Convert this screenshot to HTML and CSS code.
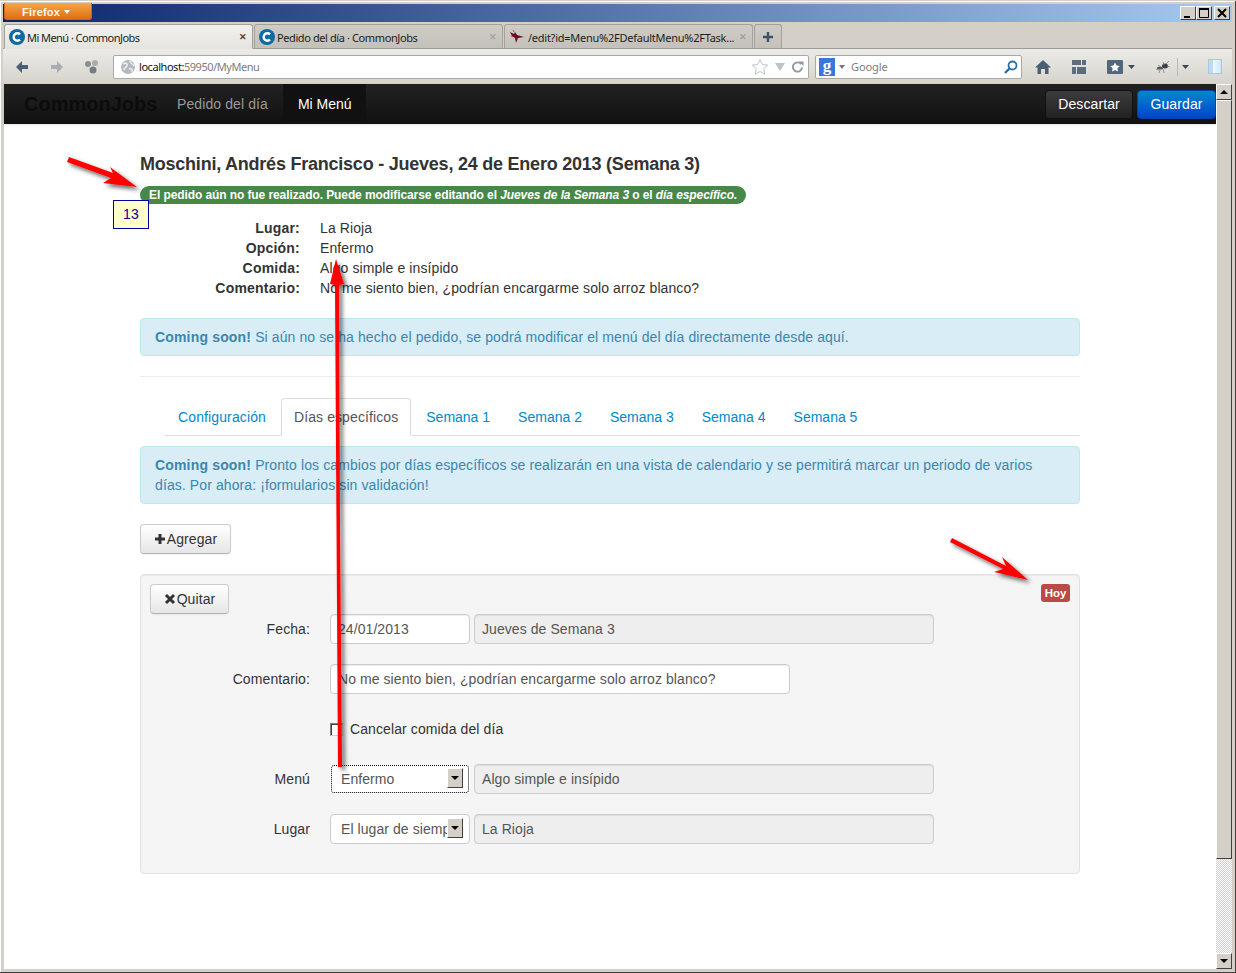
FILE: index.html
```html
<!DOCTYPE html>
<html lang="es">
<head>
<meta charset="utf-8">
<title>Mi Menú · CommonJobs</title>
<link rel="stylesheet" href="styles.css">
</head>
<body>
<div class="window">
  <div class="titlebar">
    <div class="ff-button"><span class="ff-label">Firefox</span> <span class="ff-caret"></span></div>
    <div class="win-controls">
      <span class="win-btn"><svg width="14" height="12" viewBox="0 0 14 12"><rect x="3" y="9" width="6" height="2" fill="#000"/></svg></span>
      <span class="win-btn"><svg width="14" height="12" viewBox="0 0 14 12"><path d="M2.5 1.500h9v9h-9z" fill="none" stroke="#000"/><rect x="2" y="1" width="10" height="2" fill="#000"/></svg></span>
      <span class="win-btn win-btn-last"><svg width="14" height="12" viewBox="0 0 14 12"><path d="M3 2l8 8M11 2l-8 8" stroke="#000" stroke-width="2"/></svg></span>
    </div>
  </div>

  <div class="tabstrip">
    <div class="tab tab-active">
      <svg class="fav" width="16" height="16" viewBox="0 0 16 16"><circle cx="8" cy="8" r="8" fill="#0e6ba0"/><path d="M11 5.400A3.700 3.700 0 1 0 11 10.600" fill="none" stroke="#fff" stroke-width="2.400"/></svg>
      <span class="tab-title">Mi Menú · CommonJobs</span>
      <span class="tab-x tab-x-dark">✕</span>
    </div>
    <div class="tab tab-mid">
      <svg class="fav" width="16" height="16" viewBox="0 0 16 16"><circle cx="8" cy="8" r="8" fill="#0e6ba0"/><path d="M11 5.400A3.700 3.700 0 1 0 11 10.600" fill="none" stroke="#fff" stroke-width="2.400"/></svg>
      <span class="tab-title">Pedido del día · CommonJobs</span>
      <span class="tab-x">✕</span>
    </div>
    <div class="tab tab-wide">
      <svg class="fav fav-bird" width="16" height="16" viewBox="0 0 16 16"><path d="M1 3l4 2 1-2 2 3 7 2-6 1-2 5-1-5-3-2z" fill="#6b0f1f"/><path d="M2 7l2 1M4 1l1 2" stroke="#c0485a"/></svg>
      <span class="tab-title">/edit?id=Menu%2FDefaultMenu%2FTask...</span>
      <span class="tab-x">✕</span>
    </div>
    <div class="tab tab-new"><svg width="12" height="12" viewBox="0 0 12 12"><path d="M6 1v10M1 6h10" stroke="#3d5269" stroke-width="2.400"/></svg></div>
  </div>

  <div class="toolbar">
    <svg class="tool-back" width="16" height="16" viewBox="0 0 16 16"><path d="M8 2L2 8l6 6V10h6V6H8z" fill="#4a6078"/></svg>
    <svg class="tool-fwd" width="16" height="16" viewBox="0 0 16 16"><path d="M8 2l6 6-6 6V10H2V6h6z" fill="#a8adb2"/></svg>
    <svg class="tool-hist" width="16" height="16" viewBox="0 0 16 16"><circle cx="4" cy="5" r="3" fill="#8a8f94"/><circle cx="11" cy="4" r="3" fill="#a7acb0"/><circle cx="9" cy="11" r="3.500" fill="#777c82"/></svg>
    <div class="urlbar">
      <svg width="16" height="16" viewBox="0 0 16 16"><circle cx="8" cy="8" r="7" fill="#b5b8bc"/><path d="M3 5c3-2 5 0 4 2s-3 1-3 4M10 2c0 3 3 2 4 5M9 10c2-1 4 0 3 3" fill="none" stroke="#ececec" stroke-width="1.600"/></svg>
      <span class="url-text"><span class="url-host">localhost:</span>59950/MyMenu</span>
      <svg class="url-star" width="18" height="18" viewBox="0 0 18 18"><path d="M9 1.500l2.300 5 5.400.6-4 3.700 1.100 5.400L9 13.500l-4.800 2.700 1.100-5.400-4-3.700 5.400-.6z" fill="#fff" stroke="#c0c4c8"/></svg>
      <svg class="url-drop" width="10" height="8" viewBox="0 0 10 8"><path d="M0 0h10L5 8z" fill="#bcc2c8"/></svg>
      <svg class="url-reload" width="13" height="13" viewBox="0 0 14 14"><path d="M11 4.500A5 5 0 1 0 12 8" fill="none" stroke="#8f99a3" stroke-width="2"/><path d="M8.500 1.500h5v5z" fill="#8f99a3"/></svg>
    </div>
    <div class="searchbar">
      <span class="g-logo">g</span>
      <svg width="6" height="4" viewBox="0 0 6 4"><path d="M0 0h6L3 4z" fill="#777"/></svg>
      <span class="search-text">Google</span>
      <svg class="search-glass" width="14" height="14" viewBox="0 0 14 14"><circle cx="8.500" cy="5.500" r="4" fill="none" stroke="#2a6fa8" stroke-width="1.800"/><path d="M5.500 8.500L1 13" stroke="#2a6fa8" stroke-width="2.400"/></svg>
    </div>
    <svg class="tool-home" width="16" height="16" viewBox="0 0 16 16"><path d="M8 1L0 8.500h2.500V15H6v-5h4v5h3.500V8.500H16z" fill="#4a5f74"/></svg>
    <svg class="tool-panel" width="14" height="14" viewBox="0 0 14 14"><path d="M0 0h9v5H0zM10 0h4v5h-4zM0 7h4v7H0zM5 7h9v7H5z" fill="#5a6c7e"/></svg>
    <svg class="tool-bm" width="16" height="14" viewBox="0 0 16 14"><rect width="16" height="14" rx="1" fill="#52677c"/><path d="M8 2.500l1.500 3 3.300.4-2.400 2.300.6 3.300L8 10l-3 1.500.6-3.300L3.200 5.900l3.300-.4z" fill="#fff"/></svg>
    <svg class="tool-caret" width="7" height="4" viewBox="0 0 7 4"><path d="M0 0h7L3.500 4z" fill="#3d4a56"/></svg>
    <svg class="tool-bug" width="16" height="14" viewBox="0 0 16 14"><ellipse cx="10" cy="6" rx="3" ry="2.500" fill="#3c3f42"/><ellipse cx="5" cy="8" rx="3" ry="1.600" fill="#55585c"/><path d="M1 9l3 1M3 5l3 2M8 2l1 3M14 1l-3 3M15 7l-3-1M8 9l1 4M5 10l-1 3" stroke="#8a8d90" stroke-width=".9"/></svg>
    <span class="tool-sep"></span>
    <svg class="tool-caret2" width="7" height="4" viewBox="0 0 7 4"><path d="M0 0h7L3.500 4z" fill="#3d4a56"/></svg>
    <span class="tool-side"></span>
  </div>

  <div class="viewport">
    <div class="page">
      <nav class="navbar">
        <a class="brand">CommonJobs</a>
        <a class="nav-link">Pedido del día</a>
        <a class="nav-link nav-active">Mi Menú</a>
        <span class="nav-spacer"></span>
        <button class="nav-btn nav-btn-dark">Descartar</button>
        <button class="nav-btn nav-btn-blue">Guardar</button>
      </nav>

      <main class="container">
        <h1 class="title">Moschini, Andrés Francisco - Jueves, 24 de Enero 2013 (Semana 3)</h1>
        <div class="pill-row"><span class="pill">El pedido aún no fue realizado. Puede modificarse editando el <em>Jueves de la Semana 3</em> o el <em>día específico.</em></span></div>

        <dl class="summary">
          <dt>Lugar:</dt><dd>La Rioja</dd>
          <dt>Opción:</dt><dd>Enfermo</dd>
          <dt>Comida:</dt><dd>Algo simple e insípido</dd>
          <dt>Comentario:</dt><dd>No me siento bien, ¿podrían encargarme solo arroz blanco?</dd>
        </dl>

        <div class="alert alert-first"><strong>Coming soon!</strong> Si aún no se ha hecho el pedido, se podrá modificar el menú del día directamente desde aquí.</div>
        <hr class="rule">

        <ul class="tabs">
          <li class="tabs-wide"><a>Configuración</a></li>
          <li class="tabs-active"><a>Días específicos</a></li>
          <li><a>Semana 1</a></li>
          <li><a>Semana 2</a></li>
          <li><a>Semana 3</a></li>
          <li><a>Semana 4</a></li>
          <li><a>Semana 5</a></li>
        </ul>

        <div class="alert alert-second"><strong>Coming soon!</strong> Pronto los cambios por días específicos se realizarán en una vista de calendario y se permitirá marcar un periodo de varios días. Por ahora: ¡formularios sin validación!</div>

        <button class="btn btn-add"><svg width="12" height="12" viewBox="0 0 12 12"><path d="M6 1v10M1 6h10" stroke="#333" stroke-width="3"/></svg>Agregar</button>

        <section class="well">
          <div class="well-head">
            <button class="btn btn-remove"><svg width="12" height="12" viewBox="0 0 12 12"><path d="M2 2l8 8M10 2l-8 8" stroke="#333" stroke-width="3"/></svg>Quitar</button>
            <span class="badge">Hoy</span>
          </div>
          <div class="form-row form-row-first">
            <label class="form-label">Fecha:</label>
            <input class="input input-short" value="24/01/2013">
            <input class="input input-long" value="Jueves de Semana 3" disabled>
          </div>
          <div class="form-row">
            <label class="form-label">Comentario:</label>
            <input class="input input-comment" value="No me siento bien, ¿podrían encargarme solo arroz blanco?">
          </div>
          <div class="form-row form-row-check">
            <span class="form-label"></span>
            <span class="checkbox"></span>
            <span class="check-label">Cancelar comida del día</span>
          </div>
          <div class="form-row">
            <label class="form-label">Menú</label>
            <span class="select select-focus"><select><option>Enfermo</option></select><span class="select-arrow"></span></span>
            <input class="input input-long" value="Algo simple e insípido" disabled>
          </div>
          <div class="form-row">
            <label class="form-label">Lugar</label>
            <span class="select"><select><option>El lugar de siempre</option></select><span class="select-arrow"></span></span>
            <input class="input input-long" value="La Rioja" disabled>
          </div>
        </section>
      </main>
    </div>

    <div class="scrollbar">
      <span class="sb-btn"><span class="sb-up"></span></span>
      <span class="sb-thumb"></span>
      <span class="sb-track"></span>
      <span class="sb-btn"><span class="sb-down"></span></span>
    </div>

    <div class="note">13</div>

    <svg class="arrows" width="1236" height="973" viewBox="0 0 1236 973">
      <defs>
        <filter id="shade" x="-30%" y="-30%" width="160%" height="160%"><feDropShadow dx="3" dy="3" stdDeviation="2" flood-color="#000" flood-opacity=".6"/></filter>
      </defs>
      <g fill="#f00" filter="url(#shade)">
        <path d="M69 157L113 173L110 167L137 187L103 183L111 178L67 162Z"/>
        <path d="M952 538L1006 566L1002 557L1028 580L994 572L1003 569L950 542Z"/>
        <path d="M338 767L336.500 525L335 285L330 284L336 259L344 284L339 285L340 525L342 767Z"/>
      </g>
    </svg>
  </div>
</div>
</body>
</html>
```

FILE: styles.css
```css
* { box-sizing: border-box; }
html, body { margin: 0; padding: 0; }
body {
  width: 1236px;
  height: 973px;
  overflow: hidden;
  font-family: "Liberation Sans", Arial, sans-serif;
  font-size: 14px;
  line-height: 20px;
  letter-spacing: .1px;
  color: #333;
  background: #fff;
}
.window {
  position: relative;
  width: 1236px;
  height: 973px;
  display: flex;
  flex-direction: column;
  background: #d4d0c8;
  padding: 4px 4px 4px 3px;
  border-top: 1px solid #d4d0c8;
  box-shadow: inset -1px -1px 0 #404040, inset 1px 1px 0 #fff;
}
.titlebar {
  height: 18px;
  margin-top: -1px;
  display: flex;
  align-items: flex-start;
  justify-content: space-between;
  background: linear-gradient(90deg, #0a246a, #a6caf0);
  padding-left: 1px;
}
.ff-button {
  width: 88px;
  height: 17px;
  margin-top: -1px;
  background: linear-gradient(#f7a64a, #dc6f12);
  border-radius: 0 0 3px 3px;
  border: 1px solid #c9691a;
  border-top: 0;
  color: #fff4e4;
  font: bold 11px/16px "Liberation Sans", sans-serif;
  letter-spacing: .2px;
  padding: 1px 0 0 17px;
  display: flex;
  align-items: center;
  gap: 2px;
}
.ff-caret { width: 0; height: 0; border: 3px solid transparent; border-top: 4px solid #fff; border-bottom: 0; margin-left: 2px; }
.win-controls { display: flex; margin-top: 2px; padding-right: 2px; }
.win-btn {
  width: 16px;
  height: 14px;
  background: #d4d0c8;
  border: 1px solid;
  border-color: #fff #404040 #404040 #fff;
  display: flex;
}
.win-btn-last { margin-left: 2px; }
.tabstrip {
  height: 27px;
  display: flex;
  align-items: flex-end;
  padding-left: 1px;
  gap: 1px;
  background: #d4d0c8;
  border-bottom: 1px solid #9c9a94;
  font-family: "Noto Sans", "Open Sans", sans-serif;
  font-size: 11px;
  letter-spacing: -.55px;
  color: #1c1c1c;
}
.tab {
  width: 249px;
  height: 25px;
  margin-bottom: -1px;
  display: flex;
  align-items: center;
  padding: 0 5px 0 4px;
  background: linear-gradient(#cfccc6, #c4c1ba);
  border: 1px solid #a3a199;
  border-bottom: 1px solid #9c9a94;
  border-radius: 3px 3px 0 0;
}
.tab-active {
  background: linear-gradient(#f2f1ee, #e6e4df);
  border-bottom-color: #e6e4df;
}
.tab-mid { letter-spacing: -.4px; }
.tab-wide { letter-spacing: -.25px; }
.tab-new { width: 28px; justify-content: center; padding: 0; }
.fav { flex: none; margin-right: 2px; }
.fav-bird { margin-right: 3px; }
.tab-title { flex: 1; white-space: nowrap; overflow: hidden; padding-top: 2px; }
.tab-x { font-size: 9px; color: #a3a3a0; font-weight: bold; letter-spacing: 0; }
.tab-x-dark { color: #444; }
.toolbar {
  height: 35px;
  display: flex;
  align-items: center;
  background: linear-gradient(#ecebe7, #d6d3cb);
  padding-left: 11px;
  color: #333;
}
.tool-fwd { margin-left: 19px; }
.tool-hist { margin-left: 19px; }
.urlbar {
  width: 696px;
  height: 24px;
  margin-left: 13px;
  background: #fff;
  border: 1px solid #a9a8a2;
  border-radius: 2px;
  display: flex;
  align-items: center;
  padding: 0 4px 0 6px;
  gap: 3px;
  font-family: "Noto Sans", sans-serif;
  font-size: 11px;
  letter-spacing: -.45px;
  color: #7c7c7c;
}
.url-text { flex: 1; padding-top: 1px; }
.url-host { color: #111; }
.url-star { margin-right: 1px; }
.url-drop { margin: 0 3px 0 2px; }
.searchbar {
  width: 207px;
  height: 24px;
  margin-left: 6px;
  background: #fff;
  border: 1px solid #a9a8a2;
  border-radius: 2px;
  display: flex;
  align-items: center;
  padding: 0 3px 0 3px;
  gap: 4px;
  font-family: "Noto Sans", sans-serif;
  font-size: 11px;
  letter-spacing: -.1px;
  color: #7c7c7c;
}
.g-logo {
  width: 16px;
  height: 18px;
  background: #3a76e0;
  color: #fff;
  font: bold 17px/15px "Liberation Serif", serif;
  text-align: center;
}
.search-text { flex: 1; padding: 1px 0 0 2px; }
.tool-home { margin-left: 13px; }
.tool-panel { margin-left: 21px; }
.tool-bm { margin-left: 21px; }
.tool-caret { margin-left: 5px; }
.tool-bug { margin-left: 20px; }
.tool-sep { width: 1px; height: 18px; background: #bdbab3; margin-left: 6px; }
.tool-caret2 { margin-left: 4px; }
.tool-side {
  width: 14px;
  height: 15px;
  margin-left: 19px;
  background: linear-gradient(90deg, #bcdcf5 0 30%, #f4fafe 30%, #cfe6f8);
  border: 1px solid #a9c7e2;
}
.viewport {
  flex: 1;
  min-height: 0;
  display: flex;
  margin-left: 1px;
  background: #fff;
}
.page { width: 1212px; min-width: 0; background: #fff; }
.navbar {
  height: 40px;
  display: flex;
  align-items: stretch;
  background: linear-gradient(#222, #111);
  padding-left: 20px;
  box-shadow: 0 1px 3px rgba(0, 0, 0, .1);
}
.brand {
  width: 153px;
  font-size: 20px;
  font-weight: bold;
  line-height: 40px;
  letter-spacing: 0;
  color: #0c0c0c;
}
.nav-link { padding: 0 15px 0 0; line-height: 40px; color: #999; white-space: nowrap; }
.nav-active { background: #111; color: #fff; padding: 0 15px; width: 83px; letter-spacing: 0; }
.nav-spacer { flex: 1; }
.nav-btn {
  height: 29px;
  align-self: center;
  margin: 0;
  font: 14px "Liberation Sans", sans-serif;
  letter-spacing: .1px;
  color: #fff;
  border: 1px solid #111;
  border-radius: 4px;
}
.nav-btn-dark { width: 88px; background: linear-gradient(#3c3c3c, #222); margin-right: 4px; }
.nav-btn-blue { width: 79px; background: linear-gradient(#0088cc, #0044cc); border-color: #0044aa; }
.container { width: 940px; margin: 0 auto; padding-top: 28px; }
.title { margin: 0; font-size: 18px; line-height: 24px; font-weight: bold; color: #333; letter-spacing: -.23px; }
.pill-row { display: flex; margin-top: 10px; height: 18px; }
.pill {
  height: 18px;
  padding: 0 9px;
  border-radius: 9px;
  background: #468847;
  color: #fff;
  font-size: 12px;
  font-weight: bold;
  line-height: 18px;
  letter-spacing: -.09px;
  white-space: nowrap;
}
.summary {
  display: grid;
  grid-template-columns: 160px 1fr;
  column-gap: 20px;
  margin: 14px 0 0;
}
.summary dt { font-weight: bold; text-align: right; letter-spacing: .2px; }
.summary dd { margin: 0; }
.alert {
  padding: 8px 14px;
  background: #d9edf7;
  border: 1px solid #bce8f1;
  border-radius: 4px;
  color: #3a87ad;
}
.alert strong { letter-spacing: .17px; }
.alert-first { margin-top: 20px; }
.rule { margin: 20px 0 0; border: 0; border-top: 1px solid #eee; border-bottom: 1px solid #fff; height: 2px; }
.tabs {
  list-style: none;
  display: flex;
  height: 38px;
  margin: 20px 0 0 25px;
  padding: 0;
  border-bottom: 1px solid #ddd;
}
.tabs li { height: 38px; }
.tabs a {
  display: block;
  height: 38px;
  padding: 8px 12px 0;
  margin-right: 2px;
  line-height: 20px;
  letter-spacing: 0;
  color: #0088cc;
  border: 1px solid transparent;
  border-radius: 4px 4px 0 0;
}
.tabs-wide a { letter-spacing: .12px; }
.tabs-active a {
  color: #555;
  letter-spacing: .1px;
  background: #fff;
  border-color: #ddd #ddd #fff;
}
.alert-second { margin-top: 10px; }
.btn {
  display: flex;
  align-items: center;
  justify-content: center;
  gap: 1px;
  height: 30px;
  font: 14px "Liberation Sans", sans-serif;
  letter-spacing: .1px;
  color: #333;
  background: linear-gradient(#fff, #e6e6e6);
  border: 1px solid #ccc;
  border-bottom-color: #b3b3b3;
  border-radius: 4px;
  padding: 0;
  box-shadow: inset 0 1px 0 rgba(255, 255, 255, .2), 0 1px 2px rgba(0, 0, 0, .05);
}
.btn-add { width: 91px; margin-top: 20px; }
.btn-remove { width: 79px; }
.well {
  margin-top: 20px;
  height: 300px;
  padding: 9px;
  background: #f5f5f5;
  border: 1px solid #e3e3e3;
  border-radius: 4px;
  box-shadow: inset 0 1px 1px rgba(0, 0, 0, .05);
}
.well-head { display: flex; justify-content: space-between; align-items: flex-start; height: 30px; }
.badge {
  height: 18px;
  padding: 0 3.5px;
  background: #b94a48;
  color: #fff;
  border-radius: 3px;
  font-size: 11.5px;
  font-weight: bold;
  line-height: 18px;
  letter-spacing: 0;
}
.form-row { display: flex; align-items: center; height: 30px; margin-top: 20px; gap: 4px; }
.form-row-first { margin-top: 0; }
.form-label { width: 160px; margin-right: 16px; text-align: right; color: #333; flex: none; }
.input {
  height: 30px;
  padding: 4px 7px;
  background: #fff;
  border: 1px solid #ccc;
  border-radius: 4px;
  font: 14px/20px "Liberation Sans", sans-serif;
  letter-spacing: .07px;
  color: #555;
  box-shadow: inset 0 1px 1px rgba(0, 0, 0, .075);
}
.input:disabled { background: #eee; color: #555; }
.input-short { width: 140px; }
.input-long { width: 460px; }
.input-comment { width: 460px; }
.checkbox {
  width: 13px;
  height: 13px;
  background: #fff;
  border: 1px solid;
  border-color: #808080 #d4d0c8 #d4d0c8 #808080;
  box-shadow: inset 1px 1px 0 #404040;
  margin-right: 3px;
}
.check-label { color: #333; }
.select {
  position: relative;
  display: block;
  width: 140px;
  height: 30px;
  background: #fff;
  border: 1px solid #ccc;
  border-radius: 4px;
  overflow: hidden;
  flex: none;
}
.select select {
  display: block;
  width: 138px;
  height: 28px;
  appearance: none;
  -webkit-appearance: none;
  background: transparent;
  border: 0;
  outline: 0;
  padding: 0 22px 0 10px;
  font: 14px "Liberation Sans", sans-serif;
  letter-spacing: .07px;
  color: #555;
}
.select-focus { border-color: transparent; outline: 1px dotted #000; outline-offset: -2px; border-radius: 4px; }
.select-arrow {
  position: absolute;
  top: 3px;
  right: 6px;
  width: 16px;
  height: 20px;
  background: #d4d0c8;
  border: 1px solid;
  border-color: #fff #404040 #404040 #fff;
}
.select-arrow::after {
  content: "";
  position: absolute;
  left: 3px;
  top: 7px;
  border: 4px solid transparent;
  border-top: 4px solid #000;
  border-bottom: 0;
}
.scrollbar {
  width: 16px;
  display: flex;
  flex-direction: column;
  background: repeating-conic-gradient(#d4d0c8 0 25%, #fff 0 50%) 0 0 / 2px 2px;
}
.sb-btn {
  position: relative;
  height: 16px;
  flex: none;
  background: #d4d0c8;
  border: 1px solid;
  border-color: #fff #404040 #404040 #fff;
}
.sb-up, .sb-down { position: absolute; left: 3px; width: 0; height: 0; border: 4px solid transparent; }
.sb-up { top: 5px; border-bottom: 4px solid #000; border-top: 0; }
.sb-down { top: 5px; border-top: 4px solid #000; border-bottom: 0; }
.sb-thumb {
  height: 759px;
  flex: none;
  background: #d4d0c8;
  border: 1px solid;
  border-color: #fff #404040 #404040 #fff;
}
.sb-track { flex: 1; }
.note {
  position: absolute;
  left: 113px;
  top: 199px;
  width: 36px;
  height: 29px;
  background: #ffc;
  border: 1px solid #00009b;
  color: #00009b;
  text-align: center;
  line-height: 26px;
}
.arrows { position: absolute; left: 0; top: -1px; pointer-events: none; }
```
